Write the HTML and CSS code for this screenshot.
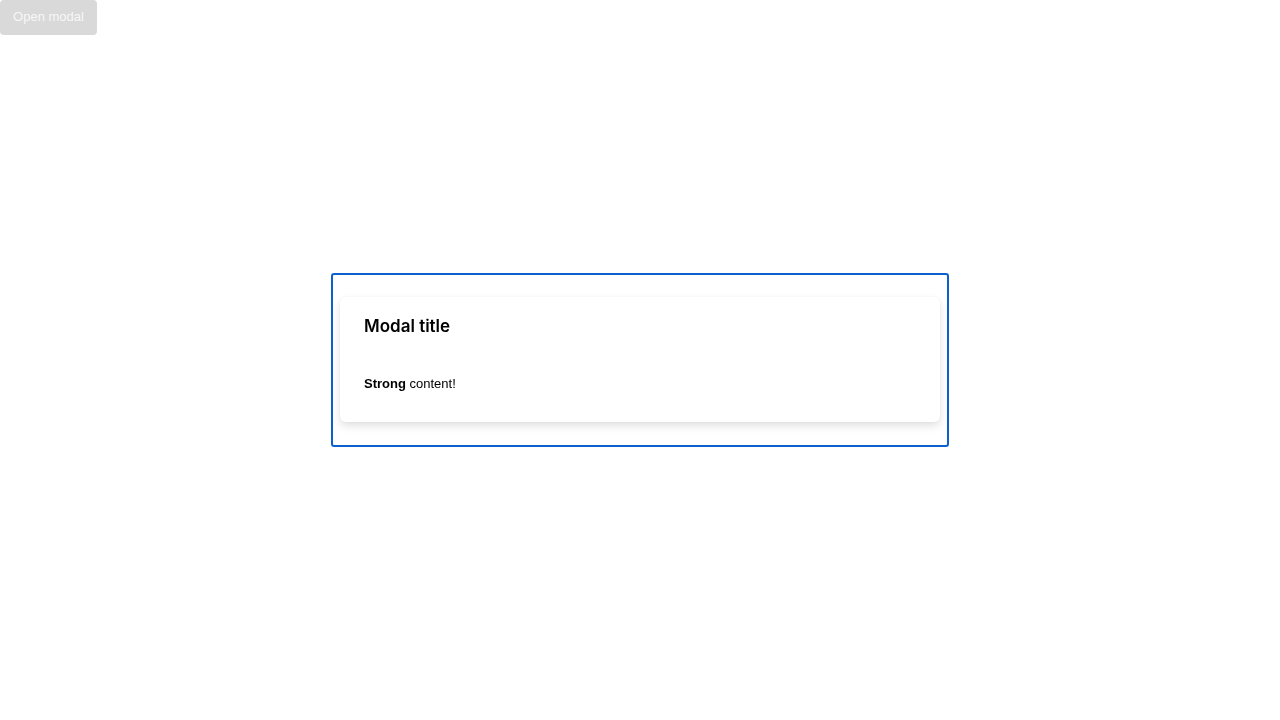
FILE: index.html
```html
<!DOCTYPE html>
<html>
<head>
<meta charset="utf-8">
<link rel="stylesheet" href="styles.css">
</head>
<body>
<button class="open-btn">Open modal</button>
<div class="overlay">
  <div class="modal-frame">
    <div class="modal-card">
      <div class="modal-header"><h2 class="modal-title">Modal title</h2></div>
      <div class="modal-body"><strong>Strong</strong> content!</div>
    </div>
  </div>
</div>
</body>
</html>
```
FILE: styles.css
```css
html, body {
  margin: 0;
  padding: 0;
  background: #ffffff;
  font-family: "Liberation Sans", Arial, sans-serif;
}
.open-btn {
  display: block;
  width: 97px;
  height: 35px;
  margin: 0;
  padding: 0 0 2px;
  border: none;
  border-radius: 4px;
  background: #d9d9d9;
  color: #f7f7f7;
  font-family: "Liberation Sans", Arial, sans-serif;
  font-size: 13px;
}
.overlay {
  position: fixed;
  inset: 0;
  display: flex;
  align-items: center;
  justify-content: center;
}
.modal-frame {
  box-sizing: border-box;
  width: 618px;
  padding: 22px 7px 23px;
  border: 2px solid #0b60cf;
  border-radius: 3px;
}
.modal-card {
  background: #fff;
  border-radius: 6px;
  box-shadow: 0 4px 8px rgba(0,0,0,0.12), 0 0 3px rgba(0,0,0,0.05);
  height: 125px;
  box-sizing: border-box;
}
.modal-header {
  padding: 19px 24px 20px;
}
.modal-title {
  margin: 0;
  font-family: Inter, "Liberation Sans", sans-serif;
  font-size: 17px;
  font-weight: 600;
  line-height: 21px;
  color: #000;
}
.modal-body {
  padding: 19px 24px 0;
  font-size: 13px;
  line-height: 16px;
  color: #000;
}
.modal-body strong {
  font-weight: 700;
}
```
